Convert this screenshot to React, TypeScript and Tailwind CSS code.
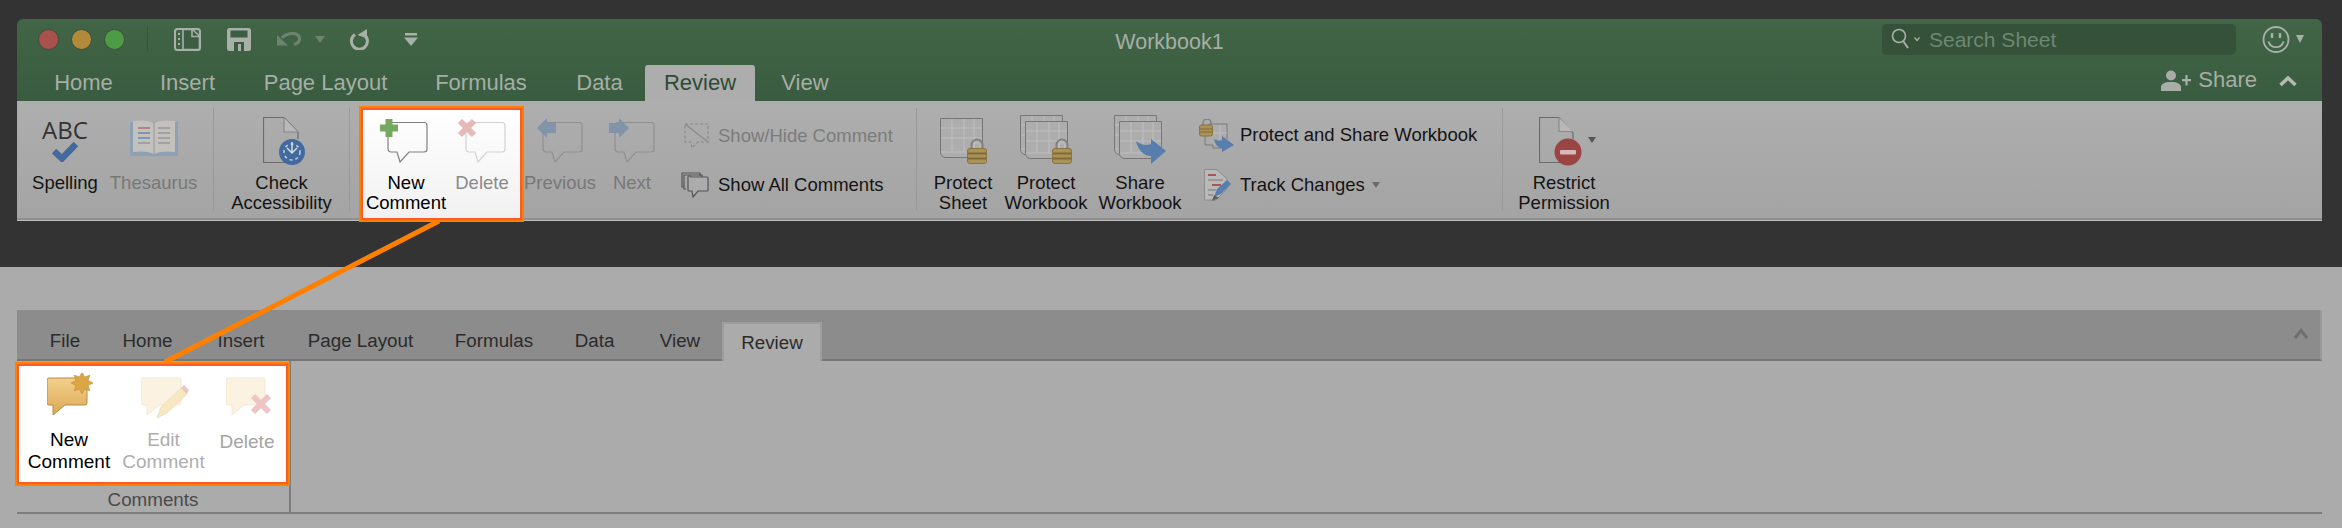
import type { ReactNode } from "react";

const burst = (cx: number, cy: number, outer: number, inner: number, n: number) =>
  Array.from({ length: n * 2 }, (_, i) => {
    const r = i % 2 ? inner : outer;
    const a = (Math.PI * i) / n;
    return `${(cx + r * Math.sin(a)).toFixed(1)},${(cy - r * Math.cos(a)).toFixed(1)}`;
  }).join(" ");

function Lock({ x, y }: { x: number; y: number }) {
  return (
    <g transform={`translate(${x} ${y})`}>
      <path d="M4.5 11V7a5.5 5.5 0 0 1 11 0v4" fill="none" stroke="#808080" strokeWidth="2" />
      <path d="M7 11V7.5a3 3 0 0 1 6 0V11" fill="none" stroke="#c4c4c4" strokeWidth="1" />
      <rect x="0.5" y="10.5" width="19" height="15" rx="2.5" fill="#ab9256" stroke="#8b7440" />
      <rect x="1" y="14.5" width="18" height="2" fill="#7f6a38" />
      <rect x="1" y="19.5" width="18" height="2" fill="#7f6a38" />
    </g>
  );
}

function Sheet({ x, y, w, h }: { x: number; y: number; w: number; h: number }) {
  const bottom = y + h;
  return (
    <g>
      <path
        d={`M${x + 0.5} ${y + 0.5}H${x + w - 0.5}V${bottom - 6}H${x + 35}V${bottom - 0.5}H${x + 6}a5 5 0 0 1-5.5-5z`}
        fill="#adadad"
        stroke="#777777"
      />
      <path d={`M${x + 1} ${y + 10}H${x + w - 1}M${x + 1} ${y + 20}H${x + w - 1}M${x + 12} ${y + 1}V${bottom - 7}M${x + 24} ${y + 1}V${bottom - 7}M${x + 34} ${y + 1}V${bottom - 7}M${x + 1} ${bottom - 6}H${x + 35}`} stroke="#c0c0c0" fill="none" />
    </g>
  );
}

function PlainBubble({ x, stroke, width = 39 }: { x: number; stroke: string; width?: number }) {
  const r = x + width;
  return (
    <path
      d={`M${x + 3} 3.5H${r - 3}a3 3 0 0 1 3 3V30a3 3 0 0 1-3 3H${x + 21}L${x + 12} 43L${x + 9} 33H${x + 3}a3 3 0 0 1-3-3V6.5a3 3 0 0 1 3-3z`}
      fill="none"
      stroke={stroke}
      strokeWidth="1.2"
    />
  );
}

function Col({ w, label, tone, children }: { w: string; label: string[]; tone: string; children: ReactNode }) {
  return (
    <div className={`shrink-0 flex flex-col ${w}`}>
      <div className="h-[72px] flex items-start">{children}</div>
      <div className={`text-center text-[18.5px] leading-[20px] whitespace-nowrap ${tone}`}>
        {label.map((line) => (
          <div key={line}>{line}</div>
        ))}
      </div>
    </div>
  );
}

function Divider() {
  return <div className="shrink-0 w-px h-[103px] mt-[7px] bg-[#999999]" />;
}

function Callout({ className, children }: { className: string; children: ReactNode }) {
  return (
    <div className={`relative z-10 shrink-0 flex border-2 border-[#ff8000] shadow-[inset_0_0_0_2px_#ff5a2a] ${className}`}>
      {children}
    </div>
  );
}

function UpperTabs() {
  const tabs = [
    { name: "Home", w: "w-[97px]" },
    { name: "Insert", w: "w-[111px]" },
    { name: "Page Layout", w: "w-[165px]" },
    { name: "Formulas", w: "w-[146px]" },
    { name: "Data", w: "w-[91px]" },
  ];
  return (
    <div className="flex pl-[18px] h-[36px] text-[22px] text-[#a6aea7]">
      {tabs.map((t) => (
        <div key={t.name} className={`${t.w} text-center leading-[35px]`}>
          {t.name}
        </div>
      ))}
      <div className="w-[110px] rounded-t-[3px] bg-[#adadad] text-center leading-[35px] text-[#2f4b35]">Review</div>
      <div className="w-[100px] text-center leading-[35px]">View</div>
      <div className="flex-1 flex items-start justify-end pr-[25px] pt-[5px]">
        <svg className="w-[30px] h-[21px]" viewBox="0 0 30 21" fill="#a6aea7">
          <circle cx="10" cy="5.5" r="5" />
          <path d="M0 21v-4c0-3 4-4.5 7-5h6c3 .5 7 2 7 5v4z" />
          <path d="M21 9h9v2.2h-9zM24.4 5h2.2v10.5h-2.2z" />
        </svg>
        <span className="ml-[7px] -mt-[3px] leading-[26px]">Share</span>
        <svg className="ml-[22px] mt-[6px] w-[18px] h-[10px]" viewBox="0 0 18 10" fill="none" stroke="#b4bab5" strokeWidth="3.5">
          <path d="M1.5 9L9 2l7.5 7" />
        </svg>
      </div>
    </div>
  );
}

function TitleBar() {
  return (
    <div className="grid grid-cols-[1fr_auto_1fr] h-[46px]">
      <div className="flex items-center h-[40px] pl-[21px]">
        <div className="w-[21px] h-[21px] rounded-full bg-[#a9524d] border border-[#3d4e37]" />
        <div className="ml-[12px] w-[21px] h-[21px] rounded-full bg-[#b28a3e] border border-[#3d4e37]" />
        <div className="ml-[12px] w-[21px] h-[21px] rounded-full bg-[#4d9a47] border border-[#3d4e37]" />
        <div className="ml-[22px] w-px h-[26px] bg-[#38543c]" />
        <svg className="ml-[26px] w-[27px] h-[23px]" viewBox="0 0 27 23" fill="none">
          <rect x="1" y="1" width="25" height="21" rx="2.5" stroke="#a7b1a8" strokeWidth="2" />
          <path d="M9 1.5H18.5L25.5 8V21.5H9z" fill="#3d5d42" stroke="#a7b1a8" strokeWidth="1.6" />
          <path d="M18 1.5V8.5H25.5" stroke="#a7b1a8" strokeWidth="1.6" />
          <path d="M5 5v2M5 10v2M5 15v2" stroke="#a7b1a8" strokeWidth="2" />
        </svg>
        <svg className="ml-[26px] w-[24px] h-[23px]" viewBox="0 0 24 23" fill="#a7b1a8">
          <path d="M2.5 0H21.5A2.5 2.5 0 0 1 24 2.5V20.5A2.5 2.5 0 0 1 21.5 23H2.5A2.5 2.5 0 0 1 0 20.5V2.5A2.5 2.5 0 0 1 2.5 0z" />
          <rect x="3.5" y="2.5" width="17" height="7" fill="#3d5d42" />
          <rect x="7" y="14" width="10" height="9" fill="#3d5d42" />
          <rect x="11" y="16" width="3" height="7" fill="#a7b1a8" />
        </svg>
        <svg className="ml-[26px] w-[25px] h-[14px]" viewBox="0 0 25 14" fill="none">
          <path d="M5 6C9 1 21 -1 22.5 6C23 9.5 20 11.5 17 12.5" stroke="#6c846f" strokeWidth="3" />
          <path d="M0 3L11 13.5H0z" fill="#6c846f" />
        </svg>
        <div className="ml-[13px] w-0 h-0 border-x-[5px] border-x-transparent border-t-[7px] border-t-[#6c846f]" />
        <svg className="ml-[24px] w-[20px] h-[21px]" viewBox="0 0 20 21" fill="none">
          <path d="M6 5.5A8 8 0 1 0 15.5 6" stroke="#a7b1a8" strokeWidth="3" />
          <path d="M18 0V9.5L8.5 6z" fill="#a7b1a8" />
        </svg>
        <svg className="ml-[35px] w-[14px] h-[13px]" viewBox="0 0 14 13" fill="#a7b1a8">
          <rect x="1" y="0" width="12" height="2.5" />
          <path d="M0 4.5H14L7 13z" />
        </svg>
      </div>
      <div className="text-[21.5px] leading-[46px] text-[#a6aea7]">Workbook1</div>
      <div className="flex items-center justify-end h-[40px] pr-[18px]">
        <div className="w-[354px] h-[31px] rounded-[5px] bg-[#355139] flex items-center pl-[9px]">
          <svg className="w-[21px] h-[24px]" viewBox="0 0 21 24" fill="none" stroke="#a7b1a8" strokeWidth="1.6">
            <circle cx="8" cy="9" r="6.5" />
            <path d="M12.5 14.5L17 21" strokeWidth="2" />
          </svg>
          <svg className="ml-[2px] w-[6px] h-[6px]" viewBox="0 0 6 6" fill="none" stroke="#a7b1a8" strokeWidth="1.2">
            <path d="M0.5 1.5L3 4.5L5.5 1.5" />
          </svg>
          <span className="ml-[9px] pt-[2px] text-[21px] text-[#6d8872]">Search Sheet</span>
        </div>
        <svg className="ml-[26px] w-[28px] h-[27px]" viewBox="0 0 28 27" fill="none" stroke="#a7b1a8" strokeWidth="1.8">
          <circle cx="14" cy="13.5" r="12.5" />
          <path d="M6.5 15.5A7.8 7.8 0 0 0 21.5 15.5" />
          <path d="M10 7v5M18 7v5" strokeWidth="2.4" />
        </svg>
        <div className="ml-[6px] w-0 h-0 border-x-[4px] border-x-transparent border-t-[8px] border-t-[#a7b1a8]" />
      </div>
    </div>
  );
}

function UpperRibbon() {
  const dark = "text-[#141414]";
  const dim = "text-[#787878]";
  return (
    <div className="flex h-[119px] pl-[13px] border-b-2 border-[#8f8f8f] shadow-[0_1px_0_#bdbdbd] bg-gradient-to-b from-[#aeaeae] to-[#a4a4a4]">
      <Col w="w-[70px]" label={["Spelling"]} tone={dark}>
        <div className="w-full flex flex-col items-center pt-[16px]">
          <div className="font-['Open_Sans',sans-serif] font-medium text-[24px] leading-[26px] text-[#333333]">ABC</div>
          <svg className="-mt-[1px] w-[26px] h-[20px]" viewBox="0 0 26 20" fill="none" stroke="#43699f" strokeWidth="6.5">
            <path d="M2 9L10 16.5L24 2" />
          </svg>
        </div>
      </Col>
      <Col w="w-[107px]" label={["Thesaurus"]} tone={dim}>
        <svg className="ml-[30px] mt-[19px] w-[48px] h-[37px]" viewBox="0 0 48 37">
          <path d="M0 2H48V36H27L24 37L21 36H0z" fill="#8ea0b4" />
          <path d="M3 1C10 0 18 0 24 3C30 0 38 0 45 1V32C38 31 30 31 24 34C18 31 10 31 3 32z" fill="#c2c1bd" />
          <path d="M24 3V34" stroke="#9a9a9a" />
          <path d="M8 8H20" stroke="#ad8585" strokeWidth="2" />
          <path d="M8 13H20M8 18H20" stroke="#7f96b3" strokeWidth="2" />
          <path d="M8 23H20M28 8H40M28 13H40M28 18H40M28 23H40" stroke="#a2a2a2" strokeWidth="2" />
        </svg>
      </Col>
      <div className="ml-[6px]" />
      <Divider />
      <Col w="w-[135px]" label={["Check", "Accessibility"]} tone={dark}>
        <svg className="ml-[49px] mt-[16px] w-[43px] h-[50px]" viewBox="0 0 43 50" fill="none">
          <path d="M22 45.5H0.5V0.5H21L35 15V22" stroke="#6c6c6c" strokeWidth="1.2" />
          <path d="M21 0.5V15H35" stroke="#8a8a8a" strokeWidth="1.2" fill="#b8b8b8" />
          <circle cx="29" cy="35" r="13" fill="#436a9f" />
          <circle cx="29" cy="35" r="8" stroke="#c4cfdd" strokeWidth="1.5" strokeDasharray="3 3" />
          <path d="M29 25V35M24 31l5 5 5-5" stroke="#d5dce6" strokeWidth="1.5" />
        </svg>
      </Col>
      <Divider />
      <div className="ml-[9px]" />
      <Callout className="w-[165px] h-[116px] mt-[5px] bg-gradient-to-b from-[#ffffff] to-[#f1f1f1]">
        <div className="w-[90px]">
          <div className="h-[65px] flex items-start">
            <svg className="ml-[19px] mt-[11px] w-[48px] h-[44px]" viewBox="0 0 48 44">
              <g transform="translate(8 0)">
                <PlainBubble x={0} stroke="#808080" />
              </g>
              <path d="M5.5 0H12.5V5.5H18V12.5H12.5V18H5.5V12.5H0V5.5H5.5z" fill="#74a95f" />
            </svg>
          </div>
          <div className="text-center text-[18.5px] leading-[20px] text-black whitespace-nowrap">
            <div>New</div>
            <div>Comment</div>
          </div>
        </div>
        <div className="w-[62px]">
          <div className="h-[65px] flex items-start">
            <svg className="ml-[6px] mt-[11px] w-[50px] h-[44px]" viewBox="0 0 50 44">
              <g transform="translate(9 0)">
                <PlainBubble x={0} stroke="#d2d2d2" />
              </g>
              <path d="M3 2L17 16M17 2L3 16" stroke="#e6b9b9" strokeWidth="6" />
            </svg>
          </div>
          <div className="text-center text-[18.5px] leading-[20px] text-[#8a8a8a]">Delete</div>
        </div>
      </Callout>
      <Col w="w-[68px]" label={["Previous"]} tone={dim}>
        <svg className="ml-[13px] mt-[17px] w-[46px] h-[45px]" viewBox="0 0 46 45">
          <g transform="translate(6 1)">
            <PlainBubble x={0} stroke="#8f8f8f" />
          </g>
          <path d="M0 10L10 0V5H19V15H10V20z" fill="#8294aa" />
        </svg>
      </Col>
      <Col w="w-[80px]" label={["Next"]} tone={dim}>
        <svg className="ml-[17px] mt-[17px] w-[47px] h-[45px]" viewBox="0 0 47 45">
          <g transform="translate(6 1)">
            <PlainBubble x={0} stroke="#8f8f8f" />
          </g>
          <path d="M20 10L10 0V5H0V15H10V20z" fill="#8294aa" />
        </svg>
      </Col>
      <div className="w-[244px] shrink-0 pt-[22px] flex flex-col gap-[23px] text-[18.5px] whitespace-nowrap">
        <div className="h-[26px] flex items-center">
          <div className="w-[46px] pl-[12px]">
            <svg className="w-[25px] h-[26px]" viewBox="0 0 25 26" fill="none" stroke="#8a8a8a" strokeWidth="1.2">
              <path d="M1 1H24V19H14L8 25L7 19H1z" strokeDasharray="3 2" />
              <path d="M1 1L24 19" />
            </svg>
          </div>
          <span className="text-[#7c7c7c]">Show/Hide Comment</span>
        </div>
        <div className="h-[26px] flex items-center">
          <div className="w-[46px] pl-[9px]">
            <svg className="w-[28px] h-[26px]" viewBox="0 0 28 26" fill="none" stroke="#555555" strokeWidth="1.2">
              <path d="M3 15H1V1H19V4" />
              <path d="M5 17H3V3H21V6" />
              <path d="M10 5H26a1 1 0 0 1 1 1V18a1 1 0 0 1-1 1H17L12 25L11 19H8a1 1 0 0 1-1-1V6a1 1 0 0 1 3-1z" fill="#acacac" />
            </svg>
          </div>
          <span className={dark}>Show All Comments</span>
        </div>
      </div>
      <Divider />
      <div className="ml-[6px]" />
      <Col w="w-[80px]" label={["Protect", "Sheet"]} tone={dark}>
        <svg className="ml-[17px] mt-[16px] w-[48px] h-[48px]" viewBox="0 0 48 48">
          <Sheet x={0} y={1} w={43} h={40} />
          <Lock x={27} y={21} />
        </svg>
      </Col>
      <Col w="w-[86px]" label={["Protect", "Workbook"]} tone={dark}>
        <svg className="ml-[17px] mt-[13px] w-[52px] h-[50px]" viewBox="0 0 52 50">
          <Sheet x={0} y={1} w={43} h={40} />
          <Sheet x={5} y={7} w={43} h={38} />
          <Lock x={32} y={24} />
        </svg>
      </Col>
      <Col w="w-[102px]" label={["Share", "Workbook"]} tone={dark}>
        <svg className="ml-[25px] mt-[13px] w-[52px] h-[50px]" viewBox="0 0 52 50">
          <Sheet x={0} y={1} w={43} h={40} />
          <Sheet x={5} y={7} w={43} h={38} />
          <path d="M22 27C27 31 33 32 37 30V25L52 37L37 50V42C30 42 24 36 22 27z" fill="#587ead" />
        </svg>
      </Col>
      <div className="w-[311px] shrink-0 pt-[17px] flex flex-col gap-[17px] text-[18.5px] whitespace-nowrap">
        <div className="h-[34px] flex items-center">
          <div className="w-[49px] pl-[8px]">
            <svg className="w-[35px] h-[33px]" viewBox="0 0 35 33" fill="none">
              <path d="M6 9V26H14V29H26V28M10 12V5H28V20" stroke="#7a7a7a" />
              <path d="M14 14H28M21 6V20" stroke="#c0c0c0" />
              <path d="M4 6V4a4 4 0 0 1 8 0V6" stroke="#808080" strokeWidth="1.5" />
              <rect x="0.5" y="6" width="13" height="11" rx="2" fill="#ab9256" stroke="#8b7440" />
              <path d="M1 10H13M1 13H13" stroke="#7f6a38" />
              <path d="M15 20C19 22 21 22 23 21V17L35 26L23 33V29C19 29 16 25 15 20z" fill="#587ead" />
            </svg>
          </div>
          <span className={dark}>Protect and Share Workbook</span>
        </div>
        <div className="h-[32px] flex items-center">
          <div className="w-[49px] pl-[13px]">
            <svg className="w-[27px] h-[32px]" viewBox="0 0 27 32" fill="none">
              <path d="M0.5 0.5H13L23 10V20L12 31H0.5z" fill="#b9b9b9" stroke="#8c8c8c" />
              <path d="M4 6H12M8 16H17" stroke="#a85656" strokeWidth="1.8" />
              <path d="M4 11H19M4 21H12M4 26H9" stroke="#8c8c8c" strokeWidth="1.5" />
              <path d="M10 28L13 20L23 11L27 15L17 25z" fill="#587ead" />
              <path d="M8 32L10 26L15 29z" fill="#5e5e5e" />
            </svg>
          </div>
          <span className={dark}>Track Changes</span>
          <div className="ml-[7px] w-0 h-0 border-x-[4px] border-x-transparent border-t-[6px] border-t-[#6a6a6a]" />
        </div>
      </div>
      <Divider />
      <Col w="w-[122px]" label={["Restrict", "Permission"]} tone={dark}>
        <svg className="ml-[36px] mt-[16px] w-[57px] h-[49px]" viewBox="0 0 57 49" fill="none">
          <path d="M22 45.5H0.5V0.5H20L34 16V22" stroke="#6c6c6c" strokeWidth="1.2" />
          <path d="M20 0.5V14.5H34" stroke="#8a8a8a" strokeWidth="1.2" fill="#b8b8b8" />
          <circle cx="29" cy="35" r="13.5" fill="#9a4444" />
          <rect x="21" y="33" width="16" height="4.5" rx="1" fill="#d8b8b8" />
          <path d="M49 20H57L53 26z" fill="#555555" />
        </svg>
      </Col>
    </div>
  );
}

function LowerRibbon() {
  const tabs = [
    { name: "File", w: "w-[64px]" },
    { name: "Home", w: "w-[101px]" },
    { name: "Insert", w: "w-[86px]" },
    { name: "Page Layout", w: "w-[153px]" },
    { name: "Formulas", w: "w-[114px]" },
    { name: "Data", w: "w-[87px]" },
    { name: "View", w: "w-[84px]" },
  ];
  return (
    <div className="w-[2305px] ml-[17px]">
      <div className="flex items-end h-[51px] pl-[16px] bg-[#8c8c8c] border-b-2 border-b-[#777777] border-r-2 border-r-[#9a9a9a] text-[18.8px] text-[#2b2b2b]">
        {tabs.map((t) => (
          <div key={t.name} className={`${t.w} h-[37px] text-center leading-[37px]`}>
            {t.name}
          </div>
        ))}
        <div className="relative w-[100px] h-[39px] -mb-[2px] bg-[#ababab] border-t-2 border-x-2 border-[#9d9d9d] text-center leading-[37px]">
          Review
        </div>
        <div className="flex-1 flex justify-end self-start pr-[12px] pt-[18px]">
          <svg className="w-[14px] h-[11px]" viewBox="0 0 14 11" fill="none" stroke="#6e6e6e" strokeWidth="3">
            <path d="M1 10L7 2.5L13 10" />
          </svg>
        </div>
      </div>
      <div className="h-[153px] border-b-2 border-[#7d7d7d]">
        <div className="w-[274px] h-full border-r-2 border-[#7d7d7d] flex flex-col">
          <Callout className="w-[275px] h-[124px] -ml-[2px] mt-[1px] bg-white">
            <div className="w-[104px]">
              <div className="h-[65px] flex items-start">
                <svg className="ml-[30px] mt-[9px] w-[46px] h-[42px]" viewBox="0 0 46 42">
                  <defs>
                    <linearGradient id="goldFill" x1="0" y1="0" x2="0" y2="1">
                      <stop offset="0" stopColor="#f3d08c" />
                      <stop offset="1" stopColor="#dca956" />
                    </linearGradient>
                  </defs>
                  <path d="M2 5H38a2 2 0 0 1 2 2V30a2 2 0 0 1-2 2H18L6 42V32H2a2 2 0 0 1-2-2V7a2 2 0 0 1 2-2z" fill="url(#goldFill)" stroke="#b88a40" />
                  <polygon points={burst(35, 10, 11, 6.5, 8)} fill="#dba645" stroke="#c08c34" strokeWidth="0.6" />
                </svg>
              </div>
              <div className="text-center text-[19px] leading-[22px] text-black whitespace-nowrap">
                <div>New</div>
                <div>Comment</div>
              </div>
            </div>
            <div className="w-[85px]">
              <div className="h-[65px] flex items-start">
                <svg className="ml-[20px] mt-[9px] w-[48px] h-[46px]" viewBox="0 0 48 46">
                  <path d="M2 5H38a2 2 0 0 1 2 2V30a2 2 0 0 1-2 2H18L6 42V32H2a2 2 0 0 1-2-2V7a2 2 0 0 1 2-2z" fill="#fbf2e2" stroke="#f4e8d2" />
                  <path d="M16 45L20 34L40 15L46 21L26 40z" fill="#f8e8c0" stroke="#ecdfcc" />
                  <path d="M40 15L43 12L48 17L46 21z" fill="#eec5c5" />
                </svg>
              </div>
              <div className="text-center text-[19px] leading-[22px] text-[#aeaeae] whitespace-nowrap">
                <div>Edit</div>
                <div>Comment</div>
              </div>
            </div>
            <div className="w-[82px]">
              <div className="h-[65px] flex items-start">
                <svg className="ml-[20px] mt-[9px] w-[46px] h-[42px]" viewBox="0 0 46 42">
                  <path d="M2 5H37a2 2 0 0 1 2 2V30a2 2 0 0 1-2 2H18L6 42V32H2a2 2 0 0 1-2-2V7a2 2 0 0 1 2-2z" fill="#fbf2e2" stroke="#f4e8d2" />
                  <path d="M27 23L43 39M43 23L27 39" stroke="#eec5c5" strokeWidth="6" />
                </svg>
              </div>
              <div className="pt-[2px] text-center text-[19px] leading-[22px] text-[#a4a4a4]">Delete</div>
            </div>
          </Callout>
          <div className="flex-1 flex items-center justify-center pb-[8px] text-[18.8px] text-[#4a4a4a]">Comments</div>
        </div>
      </div>
    </div>
  );
}

export default function App() {
  return (
    <div className="relative w-[2342px] h-[528px] overflow-hidden bg-[#ababab] font-['Liberation_Sans',Arial,sans-serif]">
      <div className="h-[267px] pt-[19px] pl-[17px] bg-[#333333]">
        <div className="w-[2305px]">
          <div className="rounded-t-[6px] bg-gradient-to-b from-[#426547] to-[#395b3f]">
            <TitleBar />
            <UpperTabs />
          </div>
          <UpperRibbon />
        </div>
      </div>
      <div className="pt-[43px]">
        <LowerRibbon />
      </div>
      <svg className="absolute inset-0 w-full h-full pointer-events-none" viewBox="0 0 2342 528">
        <path d="M439 221L165 362" stroke="#ff8000" strokeWidth="5" />
      </svg>
    </div>
  );
}
